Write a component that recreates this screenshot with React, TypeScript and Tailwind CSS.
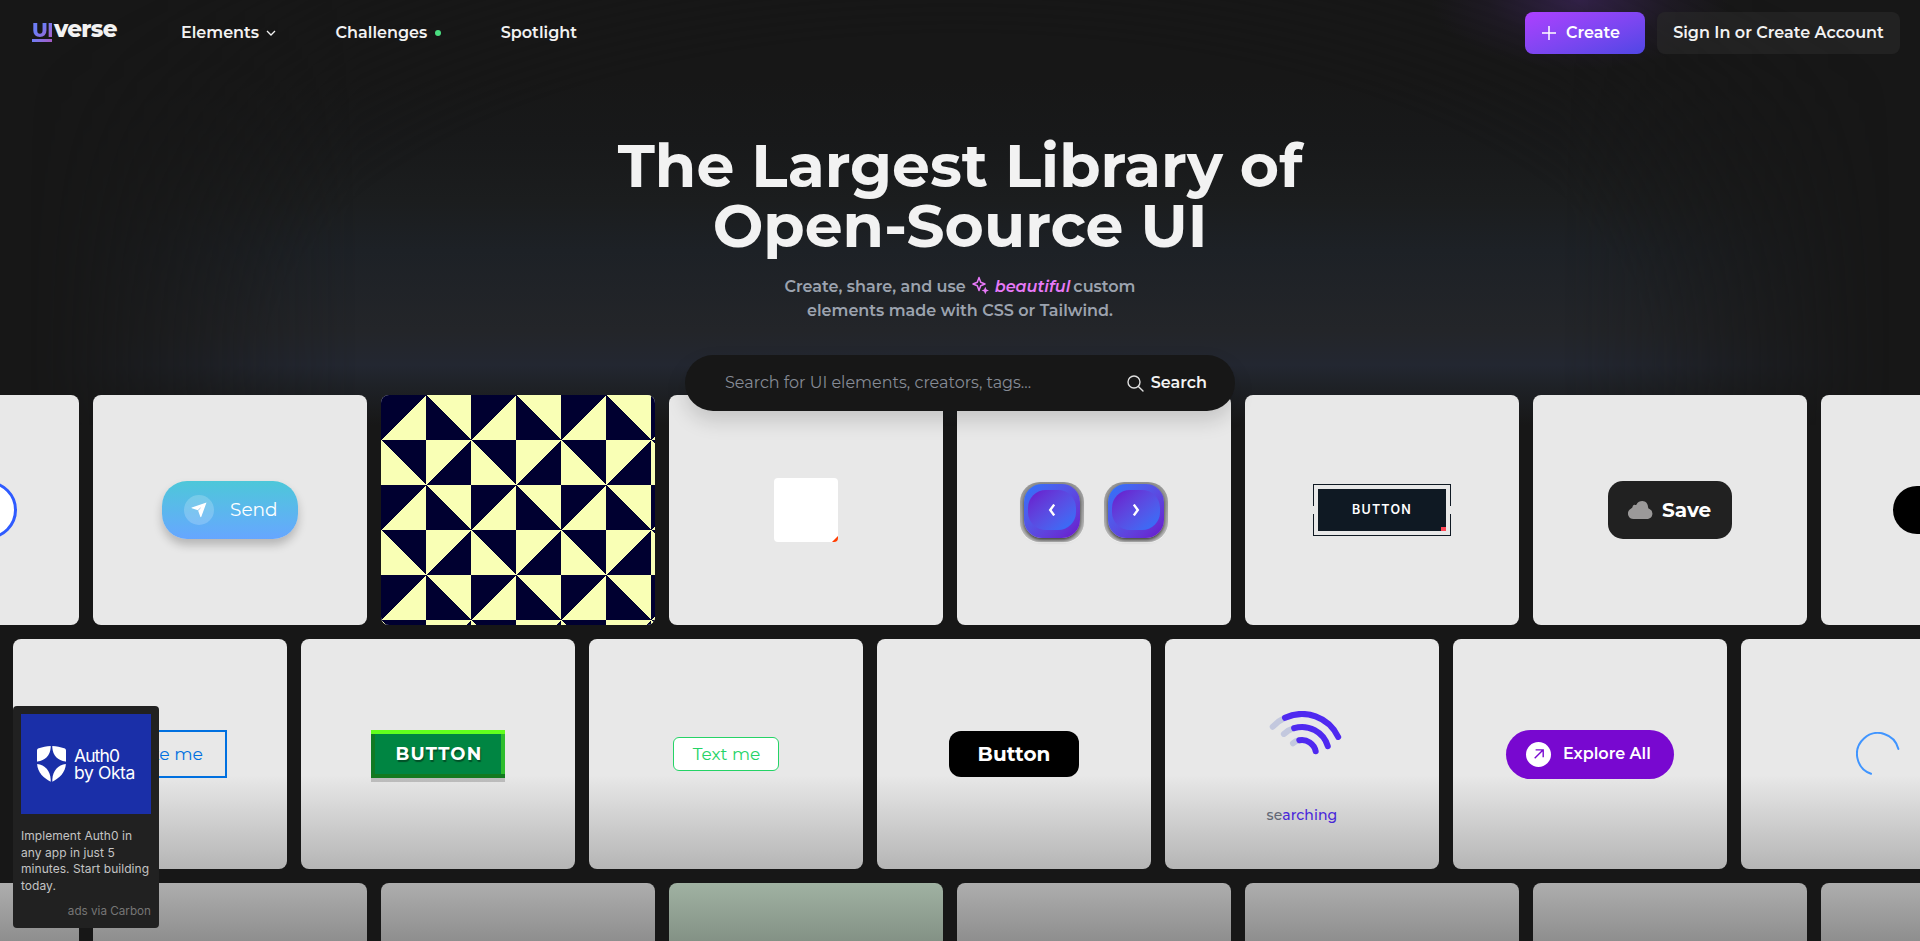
import React from 'react';

const Card = ({ children, color = 'bg-[#e8e8e8]' }: { children?: React.ReactNode; color?: string }) => (
  <div className={`relative flex h-[230px] w-[274px] shrink-0 items-center justify-center overflow-hidden rounded-lg ${color}`}>
    {children}
  </div>
);

const Logo = () => (
  <div className="flex h-5 w-[86px] items-start gap-[2px] leading-none">
    <div className="w-[20px] shrink-0">
      <div className="-mt-[2px] h-[18px] bg-gradient-to-br from-[#6d7cf5] from-40% to-[#a45ac4] bg-clip-text text-[20px] leading-[18px] font-extrabold tracking-[-0.5px] text-transparent">
        UI
      </div>
      <div className="h-[3px] w-[20px] bg-gradient-to-r from-[#6d7cf5] to-[#a45ac4]" />
    </div>
    <div className="-mt-[5px] text-[23px] leading-[22px] font-extrabold tracking-[-0.7px] text-[#f2f2f2]">verse</div>
  </div>
);

const Header = () => (
  <header className="relative flex h-[66px] items-center justify-between pr-5 pl-8 font-semibold text-[#f2f2f2]">
    <div className="flex items-center">
      <Logo />
      <nav className="ml-[63px] flex items-center gap-[59.500px]">
        <a className="flex items-center gap-[7px]">
          Elements
          <svg width="10" height="6" viewBox="0 0 10 6" fill="none" stroke="currentColor" strokeWidth="1.3">
            <path d="M1 1l4 4 4-4" />
          </svg>
        </a>
        <a className="flex items-center gap-2">
          Challenges
          <span className="size-1.5 rounded-full bg-[#4ade80]" />
        </a>
        <a>Spotlight</a>
      </nav>
    </div>
    <div className="flex items-center gap-3">
      <button className="flex h-[42px] w-[120px] items-center gap-[10px] rounded-lg bg-gradient-to-br from-[#ad3fff] to-[#4f46e5] pl-[17px] text-white">
        <svg width="14" height="14" viewBox="0 0 14 14" stroke="currentColor" strokeWidth="1.5">
          <path d="M7 0v14M0 7h14" />
        </svg>
        Create
      </button>
      <button className="h-[42px] w-[243px] rounded-lg bg-[#2a2a2a]/60">Sign In or Create Account</button>
    </div>
  </header>
);

const Sparkles = () => (
  <svg className="-mt-1 mr-[6px] ml-[6px]" width="17" height="19" viewBox="0 0 17 19" fill="none">
    <path d="M7 1.500L8.700 6.300 13 8 8.700 9.700 7 14.500 5.300 9.700 1 8 5.300 6.300Z" stroke="#e879f9" strokeWidth="1.5" strokeLinejoin="round" />
    <path d="M13.300 10.800L14.500 13.400 17 14.500 14.500 15.600 13.300 18.200 12.100 15.600 9.600 14.500 12.100 13.400Z" fill="#e879f9" />
  </svg>
);

const Hero = () => (
  <section className="relative z-10 flex flex-col items-center pt-[70px]">
    <h1 className="text-center text-[60px] leading-[60px] font-bold text-[#f2f2f2]">
      The Largest Library of
      <br />
      Open-Source UI
    </h1>
    <div className="mt-[19px] flex flex-col items-center leading-6 font-semibold text-[#9ca3af]">
      <div className="flex items-center">
        Create, share, and use
        <Sparkles />
        <span className="mr-[3px] text-[#e879f9] italic">beautiful</span>
        custom
      </div>
      <div>elements made with CSS or Tailwind.</div>
    </div>
    <div className="mt-8 flex h-14 w-[550px] items-center rounded-[28px] bg-[#171717] pr-7 pl-10 shadow-[0_10px_20px_rgba(0,0,0,0.15)]">
      <span className="flex-1 text-[#868b95]">Search for UI elements, creators, tags...</span>
      <svg className="mr-[7px]" width="17" height="17" viewBox="0 0 17 17" fill="none" stroke="#e0e0e0" strokeWidth="1.4" strokeLinecap="round">
        <circle cx="7" cy="7" r="6" />
        <path d="M11.4 11.4L16 16" />
      </svg>
      <span className="font-semibold text-[#f2f2f2]">Search</span>
    </div>
  </section>
);

const SendButton = () => (
  <div className="flex h-[58px] w-[136px] items-center rounded-[25px] bg-gradient-to-b from-[#4dc7d9] to-[#66a6ff] pl-[22px] text-white shadow-[0_6px_10px_rgba(0,0,0,0.22)]">
    <span className="flex size-[30px] items-center justify-center rounded-full bg-white/20">
      <svg width="16" height="16" viewBox="0 0 16 16">
        <path d="M15.5.5L.8 5.4c-.5.2-.5.7 0 .9L7 8.2 9.3 14.8c.2.5.8.5 1 0z" fill="#fff" />
        <path d="M9.6 5.9L7 8.4" stroke="#86bfee" strokeWidth=".8" />
      </svg>
    </span>
    <span className="ml-4 text-[18.500px] font-normal">Send</span>
  </div>
);

const TrianglePattern = () => (
  <svg className="absolute inset-0" width="274" height="230" shapeRendering="crispEdges">
    <defs>
      <pattern id="tri" width="90" height="90" patternUnits="userSpaceOnUse">
        <rect width="90" height="90" fill="#000030" />
        <path d="M0 45L45 0V45ZM45 0H90V45ZM0 45L45 90H0ZM45 45H90L45 90Z" fill="#f9ffb5" />
      </pattern>
    </defs>
    <rect width="274" height="230" fill="url(#tri)" />
  </svg>
);

const FoldSquare = () => (
  <div className="relative size-16 overflow-hidden rounded bg-white">
    <svg className="absolute right-0 bottom-0" width="6" height="6">
      <path d="M6 0V6H0Z" fill="#ff3d00" />
    </svg>
  </div>
);

const ArrowKey = ({ flip = false }: { flip?: boolean }) => (
  <div className="flex h-[60px] w-16 justify-center rounded-[20px] bg-gradient-to-b from-[#969696] to-[#c6c6c6] pt-[2px] shadow-[0_1px_0_#f8f8f8]">
    <div className="flex h-[54px] w-14 justify-center rounded-[18px] bg-gradient-to-br from-[#2575fc] to-[#6a11cb] pt-[6px] shadow-[0_2px_4px_rgba(0,0,0,0.75)]">
      <div className="flex h-10 w-12 items-center justify-center rounded-[18px] bg-gradient-to-br from-[#6a11cb] to-[#2575fc]">
        <svg className={flip ? 'rotate-180' : ''} width="8" height="12" viewBox="0 0 8 12" fill="none" stroke="#fff" strokeWidth="2.4">
          <path d="M6.2 .6L2.2 6l4 5.4" />
        </svg>
      </div>
    </div>
  </div>
);

const FramedButton = () => (
  <div className="relative flex h-[52px] w-[138px] items-center justify-center border border-[#0f1923]">
    <span className="absolute top-[21px] -left-px h-2 w-px bg-[#e8e8e8]" />
    <span className="absolute top-[21px] -right-px h-2 w-px bg-[#e8e8e8]" />
    <div className="relative flex h-[42px] w-[128px] items-center justify-center bg-[#0f1923] pt-px font-[Inter,sans-serif] text-[12.500px] font-semibold tracking-[1.2px] text-white">
      BUTTON
      <span className="absolute right-0 bottom-0 h-1 w-[5px] bg-[#ff4655]" />
    </div>
  </div>
);

const SaveButton = () => (
  <div className="flex h-[58px] w-[124px] items-center rounded-[15px] bg-[#212121] pl-5 text-[20px] font-bold text-white">
    <svg className="mr-[9px]" width="25" height="18" viewBox="0 0 25 18">
      <path
        d="M5.500 18A5.500 5.500 0 0 1 1.500 8.700C3 7.500 4.200 7.200 4.600 5.700 5 4.200 6.200 3.500 7.300 4c.8.3 1.200 0 1.500-1C9.600 1.200 12 0 14.300 0 17.800 0 20 2.800 20 5.800c.1 1.200.5 1.800 1.600 2.300A5.300 5.300 0 0 1 20 18z"
        fill="#9b9999"
      />
    </svg>
    Save
  </div>
);

const GreenButton = () => (
  <div className="flex h-12 w-[134px] items-center justify-center bg-[#008542] pl-[2px] text-[18px] font-bold tracking-[1.2px] text-white shadow-[inset_0_4px_0_#61ff1d,inset_0_-4px_0_#137a1f,inset_-4px_0_0_#2ebd2d,inset_4px_0_0_#107a24,0_4px_0_#bebebe] [text-shadow:1px_2px_1px_rgba(0,0,0,0.4)]">
    BUTTON
  </div>
);

const WifiLoader = () => (
  <div className="relative size-[86px]">
    <svg width="86" height="86" viewBox="-43 -43 86 86" fill="none" strokeWidth="6" strokeLinecap="round">
      <g stroke="#c3c8de">
        <path d="M-29.300 -27.300A40 40 0 0 1 -17 -36.200" />
        <path d="M-18.100 -20.100A27 27 0 0 1 -8 -25.800" />
        <path d="M-9 -10.700A14 14 0 0 1 -2.700 -13.700" />
      </g>
      <g stroke="#4f29f0">
        <path d="M-17 -36.200A40 40 0 0 1 36.200 -17" />
        <path d="M-7.900 -25.800A27 27 0 0 1 25.800 -7.900" />
        <path d="M-2.700 -13.700A14 14 0 0 1 13.700 -2.700" />
      </g>
    </svg>
    <div className="absolute top-[94px] left-1/2 -translate-x-1/2 text-[14px] leading-5 font-medium tracking-[0.1px] text-[#4f29f0]">
      <span className="text-[#6b7080]">se</span>arching
    </div>
  </div>
);

const ExploreButton = () => (
  <div className="flex h-[49px] w-[168px] items-center rounded-full bg-[#7808d0] pl-5 font-semibold text-white">
    <span className="mr-3 flex size-[25px] items-center justify-center rounded-full bg-white">
      <svg width="10" height="10" viewBox="0 0 10 10" fill="none" stroke="#7808d0" strokeWidth="1.4">
        <path d="M.7 9.300L9 1M1.600 .9H9.200V8.300" />
      </svg>
    </span>
    Explore All
  </div>
);

const Ad = () => (
  <aside className="absolute top-[706px] left-[13px] h-[222px] w-[146px] rounded bg-[#212121] p-2 font-[Inter,sans-serif]">
    <div className="flex h-[100px] w-[130px] items-center bg-[#1a2fa8] pl-4 text-white">
      <svg width="29" height="36" viewBox="0 0 29 36" fill="#fff">
        <path d="M13.700 0v1.500C13.200 9.500 8 14.500.5 15.600L0 15.700V4.600C0 3.400.7 2.700 1.800 2.300 5.500 1 9.500.2 13.700 0Z" />
        <path d="M15.300 0v1.500C15.800 9.500 21 14.500 28.500 15.600l.5.100V4.600c0-1.200-.7-1.900-1.800-2.300C23.500 1 19.500.2 15.300 0Z" />
        <path d="M.1 18C8 18.900 13.200 24.500 13.700 33.500V35.800C6.500 32 .6 26.500.1 18Z" />
        <path d="M28.900 18C21 18.900 15.800 24.500 15.300 33.500V35.800C22.500 32 28.400 26.500 28.900 18Z" />
      </svg>
      <div className="ml-2 text-[17.500px] leading-[17px] tracking-[-0.4px]">
        <span className="tracking-[-0.9px]">Auth0</span>
        <br />
        by Okta
      </div>
    </div>
    <div className="mt-[14px] text-[12px] leading-[16.700px] tracking-[0.05px] text-[#c4c4c4]">
      Implement Auth0 in
      <br />
      any app in just 5
      <br />
      minutes. Start building
      <br />
      today.
    </div>
    <div className="mt-[8px] text-right text-[11.700px] leading-4 text-[#767676]">ads via Carbon</div>
  </aside>
);

export default function App() {
  return (
    <div className="relative h-[941px] w-full overflow-hidden bg-[#171717] font-[Montserrat,Inter,sans-serif] text-[16px]">
      <div className="absolute inset-x-0 top-0 h-[425px] [mask-image:linear-gradient(to_right,transparent_30px,rgba(0,0,0,0.4)_130px,#000_360px,#000_1560px,rgba(0,0,0,0.4)_1790px,transparent_1890px)]">
        <div className="size-full bg-[linear-gradient(to_bottom,#171717_80px,#18191a_140px,#1b1d1e_200px,#1d2126_250px,#232529_330px,#232731_365px,#1e2126_388px,#171717_425px)] [mask-image:radial-gradient(ellipse_1150px_540px_at_50%_85%,#000_60%,transparent_97%)]" />
      </div>
      <div className="absolute top-0 left-[1430px] h-[75px] w-[300px] bg-[radial-gradient(ellipse_150px_70px_at_50%_0%,rgba(120,60,200,0.270),rgba(120,60,200,0.070)_60%,transparent)]" />
      <Header />
      <Hero />
      <main className="-mt-4 flex flex-col gap-[14px]">
        <div className="-ml-[195px] flex gap-[14px]">
          <Card>
            <div className="h-[58px] w-[150px] rounded-full border-[3px] border-[#2f5bff] bg-white" />
          </Card>
          <Card>
            <SendButton />
          </Card>
          <Card>
            <TrianglePattern />
          </Card>
          <Card>
            <FoldSquare />
          </Card>
          <Card>
            <div className="flex gap-5 pt-1">
              <ArrowKey />
              <ArrowKey flip />
            </div>
          </Card>
          <Card>
            <FramedButton />
          </Card>
          <Card>
            <SaveButton />
          </Card>
          <Card>
            <div className="h-12 w-[130px] rounded-full bg-black" />
          </Card>
        </div>
        <div className="ml-[13px] flex gap-[14px]">
          <Card>
            <div className="flex h-12 w-[154px] items-center justify-end border-2 border-[#0070e0] pr-[22px] text-[17.300px] text-[#0070e0]">Take me</div>
          </Card>
          <Card>
            <GreenButton />
          </Card>
          <Card>
            <div className="flex h-[34px] w-[106px] items-center justify-center rounded-md border border-[#25d366] bg-white pt-[2px] pl-px text-[17px] font-normal text-[#25d366]">
              Text me
            </div>
          </Card>
          <Card>
            <div className="flex h-[46px] w-[130px] items-center justify-center rounded-xl bg-black text-[20px] font-bold text-white">Button</div>
          </Card>
          <Card>
            <WifiLoader />
          </Card>
          <Card>
            <ExploreButton />
          </Card>
          <Card>
            <svg width="44" height="44" viewBox="-22 -22 44 44" fill="none" stroke="#4095ff" strokeWidth="2">
              <path d="M20.400 -5A21 21 0 1 0 -7 19.800" strokeLinecap="round" />
            </svg>
          </Card>
        </div>
        <div className="-ml-[195px] flex gap-[14px]">
          <Card />
          <Card />
          <Card />
          <Card color="bg-[#d5eed8]" />
          <Card />
          <Card />
          <Card />
          <Card />
        </div>
      </main>
      <div className="absolute inset-x-0 bottom-0 h-[166px] bg-gradient-to-t from-[#171717]/43 to-transparent" />
      <Ad />
    </div>
  );
}
